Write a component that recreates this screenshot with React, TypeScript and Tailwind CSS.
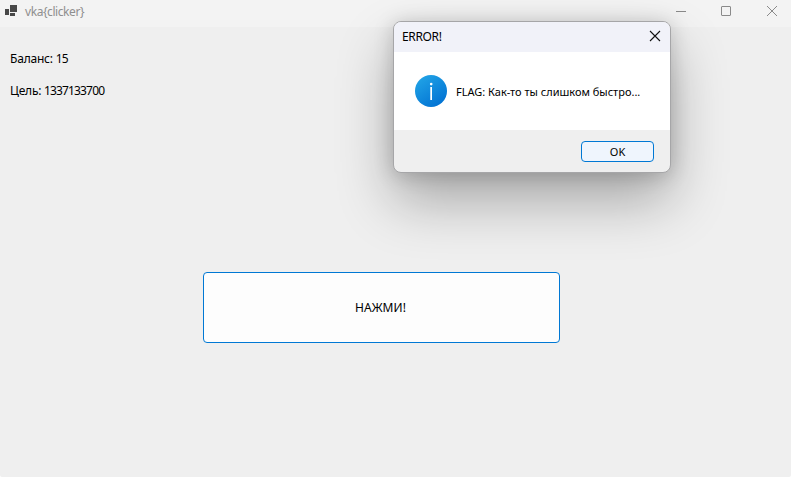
import React from "react";

function AppIcon() {
  return (
    <svg className="ml-[5px] mt-[5px] h-[11px] w-3 shrink-0" viewBox="0 0 12 11" fill="#484848" shapeRendering="crispEdges">
      <rect x="0" y="4" width="4" height="6" />
      <rect x="5" y="0" width="7" height="7" />
      <rect x="5" y="8" width="5" height="3" />
    </svg>
  );
}

function TitleBar() {
  return (
    <header className="flex h-[27px] items-start bg-[#f3f3f3]">
      <AppIcon />
      <span className="ml-2 mt-[3px] text-[12px] leading-[18px] tracking-[-0.43px] text-[#8f8f8f]">{"vka{clicker}"}</span>
      <div className="ml-auto flex pr-[13px] pt-[5px]">
        <svg className="mr-[35px] h-3 w-[10px]" viewBox="0 0 10 12" fill="none" stroke="#8a8a8a">
          <path d="M0 6.5h10" />
        </svg>
        <svg className="mr-[35px] h-3 w-[10px]" viewBox="0 0 10 12" fill="none" stroke="#8a8a8a">
          <rect x="0.5" y="1.5" width="9" height="9" rx="0.5" />
        </svg>
        <svg className="h-3 w-[12px]" viewBox="0 0 12 12" fill="none" stroke="#8a8a8a">
          <path d="M1 1l10 10M11 1L1 11" />
        </svg>
      </div>
    </header>
  );
}

function InfoIcon() {
  return (
    <svg className="ml-[21px] mt-[23px] h-8 w-8 shrink-0" viewBox="0 0 32 32">
      <defs>
        <linearGradient id="info" x1="0.15" y1="0.05" x2="0.8" y2="1">
          <stop offset="0" stopColor="#21a3e6" />
          <stop offset="1" stopColor="#0070d2" />
        </linearGradient>
      </defs>
      <circle cx="16" cy="16" r="16" fill="url(#info)" />
      <circle cx="16.2" cy="9.1" r="1.3" fill="#fff" />
      <rect x="15.3" y="12" width="1.7" height="13" fill="#fff" />
    </svg>
  );
}

function ErrorDialog() {
  return (
    <section className="absolute left-[393px] top-[21px] flex h-[152px] w-[278px] flex-col rounded-lg border border-[#a6a6a8] bg-[#efefef] shadow-[0_28px_56px_rgba(0,0,0,0.3),0_2px_20px_rgba(0,0,0,0.18)]">
      <div className="flex h-[30px] shrink-0 items-start justify-between rounded-t-[7px] bg-[#f1f2f9] pl-2 pr-[9px]">
        <span className="mt-[6px] text-[12px] leading-[18px] tracking-[-0.35px] text-black">ERROR!</span>
        <svg className="mt-2 h-3 w-3" viewBox="0 0 12 12" fill="none" stroke="#111" strokeWidth="1.1">
          <path d="M1 1l10 10M11 1L1 11" />
        </svg>
      </div>
      <div className="flex h-[78px] shrink-0 items-start bg-white">
        <InfoIcon />
        <p className="ml-[9px] mt-[31px] whitespace-nowrap text-[11px] leading-[18px] text-black">FLAG: Как-то ты слишком быстро...</p>
      </div>
      <div className="flex justify-end pr-4 pt-[11px]">
        <button className="h-[21px] w-[73px] rounded-[4px] border border-[#0078d4] bg-[#eff5fd] text-[11px] leading-[19px] text-black">OK</button>
      </div>
    </section>
  );
}

export default function App() {
  return (
    <div className="relative h-[477px] w-[791px] overflow-hidden rounded-b-[2px] bg-[#efefef] font-['Noto_Sans',sans-serif]">
      <TitleBar />
      <main>
        <div className="flex flex-col gap-[14px] pl-[10px] pt-[23px] text-[12px] leading-[18px] tracking-[-0.2px] text-black">
          <p>Баланс: <span className="tracking-[-0.86px]">15</span></p>
          <p>Цель: <span className="tracking-[-0.86px]">1337133700</span></p>
        </div>
        <button className="ml-[203px] mt-[172px] block h-[71px] w-[357px] rounded-[4px] border border-[#0078d4] bg-[#fdfdfd] pr-[2px] text-[12px] tracking-[0.1px] text-black">НАЖМИ!</button>
      </main>
      <ErrorDialog />
    </div>
  );
}
